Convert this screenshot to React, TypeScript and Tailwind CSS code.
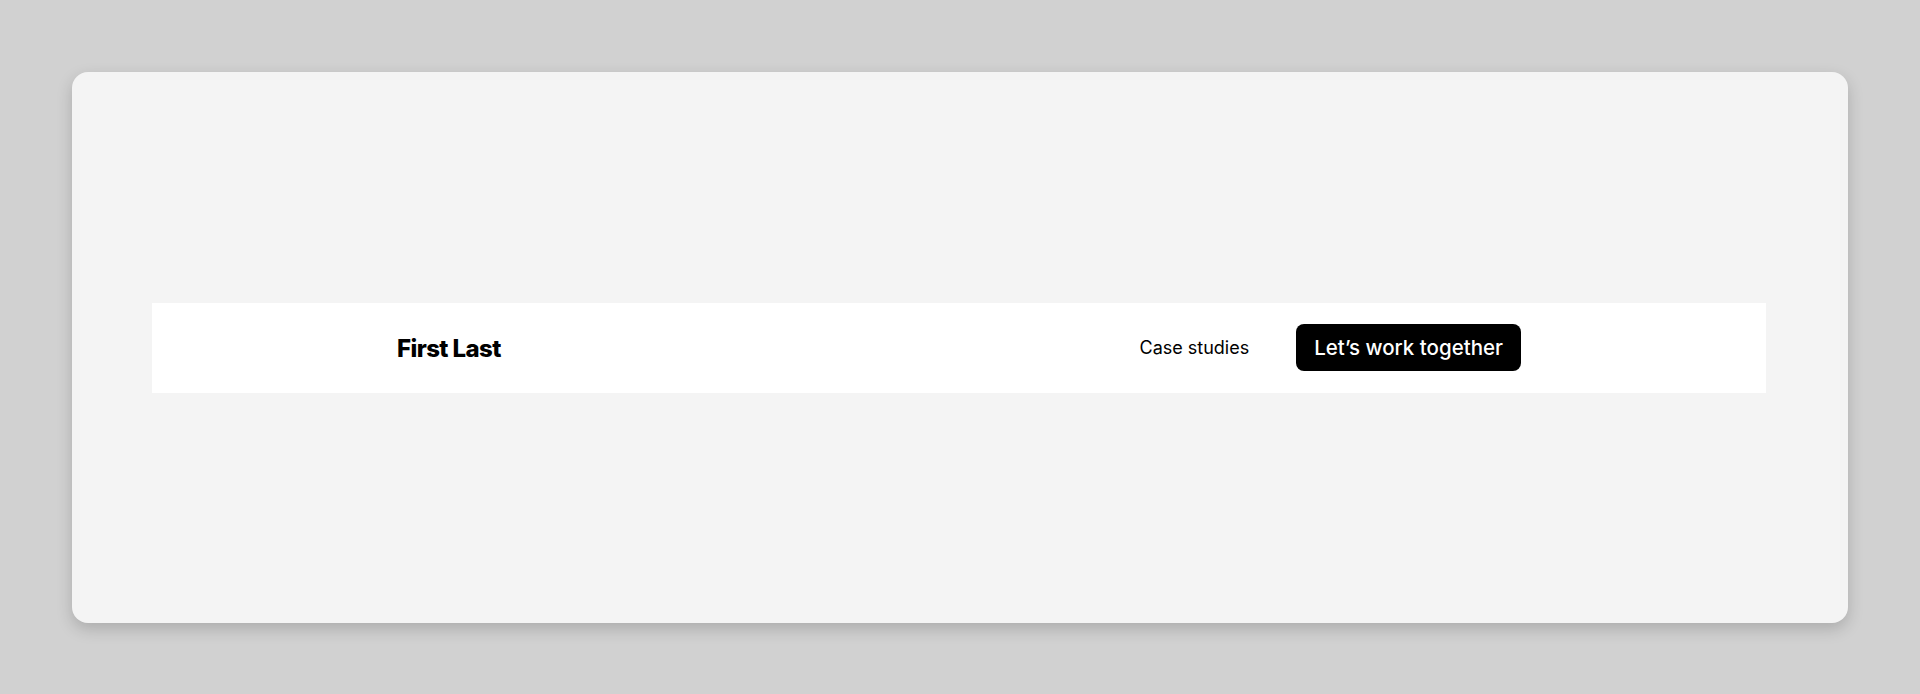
import React from "react";

export default function App() {
  return (
    <div
      className="w-full h-[694px] bg-[#d1d1d1] p-[72px]"
      style={{ fontFamily: "Inter, 'Noto Sans', sans-serif" }}
    >
      <div className="h-[551px] w-full rounded-2xl bg-[#f4f4f4] shadow-[0_6px_16px_rgba(0,0,0,0.18)] flex items-center pl-[80px] pr-[82px]">
        <div className="w-full h-[90px] bg-white flex items-center">
          <div className="w-[1124px] mx-auto flex items-center justify-between">
            <div className="text-[24px] font-extrabold tracking-[-0.025em] text-black leading-none pt-[2px]">
              First Last
            </div>
            <div className="flex items-center gap-[47px]">
              <a className="text-[18px] text-black leading-none">Case studies</a>
              <button className="h-[47px] px-[18px] pt-[2px] rounded-[8px] bg-black text-white text-[20.5px] font-medium leading-none">
                Let’s work together
              </button>
            </div>
          </div>
        </div>
      </div>
    </div>
  );
}
